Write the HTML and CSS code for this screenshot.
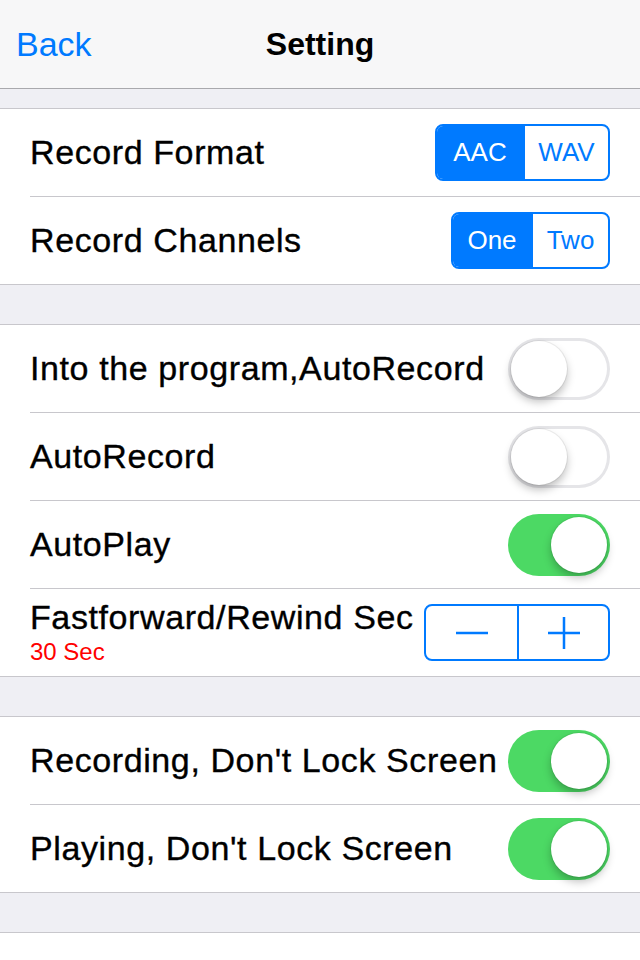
FILE: index.html
```html
<!DOCTYPE html>
<html lang="en">
<head>
    <meta charset="UTF-8">
    <meta name="viewport" content="width=device-width, initial-scale=1.0">
    <title>Setting</title>
    <link rel="stylesheet" href="styles.css">
</head>
<body>

<div class="navbar">
    <a class="nav-back" href="#">Back</a>
    <h1 class="nav-title">Setting</h1>
    <span></span>
</div>

<div class="section first">
    <div class="row">
        <span class="label">Record Format</span>
        <div class="seg">
            <span class="seg-item active w-aac">AAC</span>
            <span class="seg-item w-wav">WAV</span>
        </div>
    </div>
    <div class="row">
        <span class="label">Record Channels</span>
        <div class="seg">
            <span class="seg-item active w-one">One</span>
            <span class="seg-item w-two">Two</span>
        </div>
    </div>
</div>

<div class="section">
    <div class="row">
        <span class="label">Into the program,AutoRecord</span>
        <div class="switch"><span class="knob"></span></div>
    </div>
    <div class="row">
        <span class="label">AutoRecord</span>
        <div class="switch"><span class="knob"></span></div>
    </div>
    <div class="row">
        <span class="label">AutoPlay</span>
        <div class="switch on"><span class="knob"></span></div>
    </div>
    <div class="row">
        <div class="label-group">
            <span class="label">Fastforward/Rewind Sec</span>
            <span class="detail">30 Sec</span>
        </div>
        <div class="stepper">
            <button class="step" type="button">
                <svg width="32" height="32" viewBox="0 0 32 32"><path d="M0 16H32" stroke="#007aff" stroke-width="2.5"/></svg>
            </button>
            <button class="step" type="button">
                <svg width="32" height="32" viewBox="0 0 32 32"><path d="M0 16H32M16 0V32" stroke="#007aff" stroke-width="2.5"/></svg>
            </button>
        </div>
    </div>
</div>

<div class="section">
    <div class="row">
        <span class="label">Recording, Don't Lock Screen</span>
        <div class="switch on"><span class="knob"></span></div>
    </div>
    <div class="row">
        <span class="label">Playing, Don't Lock Screen</span>
        <div class="switch on"><span class="knob"></span></div>
    </div>
</div>

<div class="section footer"></div>

</body>
</html>
```

FILE: styles.css
```css
body {
    font-family: "Liberation Sans", Arial, sans-serif;
    background-color: #efeff4;
    margin: 0;
    color: #000;
}
.navbar {
    height: 88px;
    background: #f7f7f8;
    border-bottom: 1px solid #a9a9ad;
    display: grid;
    grid-template-columns: 1fr auto 1fr;
    align-items: center;
}
.nav-back {
    color: #007aff;
    text-decoration: none;
    font-size: 34px;
    padding-left: 16px;
}
.nav-title {
    margin: 0;
    font-size: 32px;
    font-weight: bold;
}
.section {
    background: white;
    border-top: 1px solid #c8c7cc;
    border-bottom: 1px solid #c8c7cc;
    margin-top: 39px;
}
.section.first {
    margin-top: 19px;
}
.section.footer {
    border-bottom: none;
    height: 40px;
}
.row {
    height: 87px;
    margin-left: 30px;
    padding-right: 30px;
    display: flex;
    align-items: center;
    justify-content: space-between;
    border-top: 1px solid #c8c7cc;
}
.row:first-child {
    border-top: none;
}
.label {
    font-size: 34px;
    letter-spacing: 0.6px;
    white-space: nowrap;
    -webkit-text-stroke: 0.35px #000;
}
.label-group {
    display: flex;
    flex-direction: column;
}
.label-group .label {
    line-height: 36px;
}
.detail {
    color: #ff0000;
    font-size: 24px;
    line-height: 30px;
    margin-top: 2px;
}
.seg, .stepper, .switch {
    flex-shrink: 0;
}
.seg {
    display: flex;
    border: 2px solid #007aff;
    border-radius: 8px;
    overflow: hidden;
    height: 53px;
}
.seg-item {
    display: flex;
    align-items: center;
    justify-content: center;
    font-size: 26px;
    color: #007aff;
}
.seg-item.active {
    background: #007aff;
    color: white;
}
.seg-item + .seg-item {
    border-left: 2px solid #007aff;
}
.w-aac { width: 86px; }
.w-wav { width: 83px; }
.w-one { width: 78px; }
.w-two { width: 75px; }
.switch {
    width: 102px;
    height: 62px;
    box-sizing: border-box;
    border-radius: 31px;
    padding: 3px;
    display: flex;
    align-items: center;
    background: white;
    box-shadow: inset 0 0 0 3px #e5e5e8;
}
.switch.on {
    background: #4cd964;
    box-shadow: none;
    justify-content: flex-end;
}
.knob {
    width: 56px;
    height: 56px;
    border-radius: 50%;
    background: white;
    box-shadow: 0 5px 9px rgba(0, 0, 0, 0.25), 0 0 0 1px rgba(0, 0, 0, 0.06);
}
.stepper {
    display: flex;
    border: 2px solid #007aff;
    border-radius: 8px;
    height: 53px;
}
.step {
    width: 91px;
    padding: 0;
    border: none;
    background: none;
    display: flex;
    align-items: center;
    justify-content: center;
}
.step + .step {
    border-left: 2px solid #007aff;
}
```
